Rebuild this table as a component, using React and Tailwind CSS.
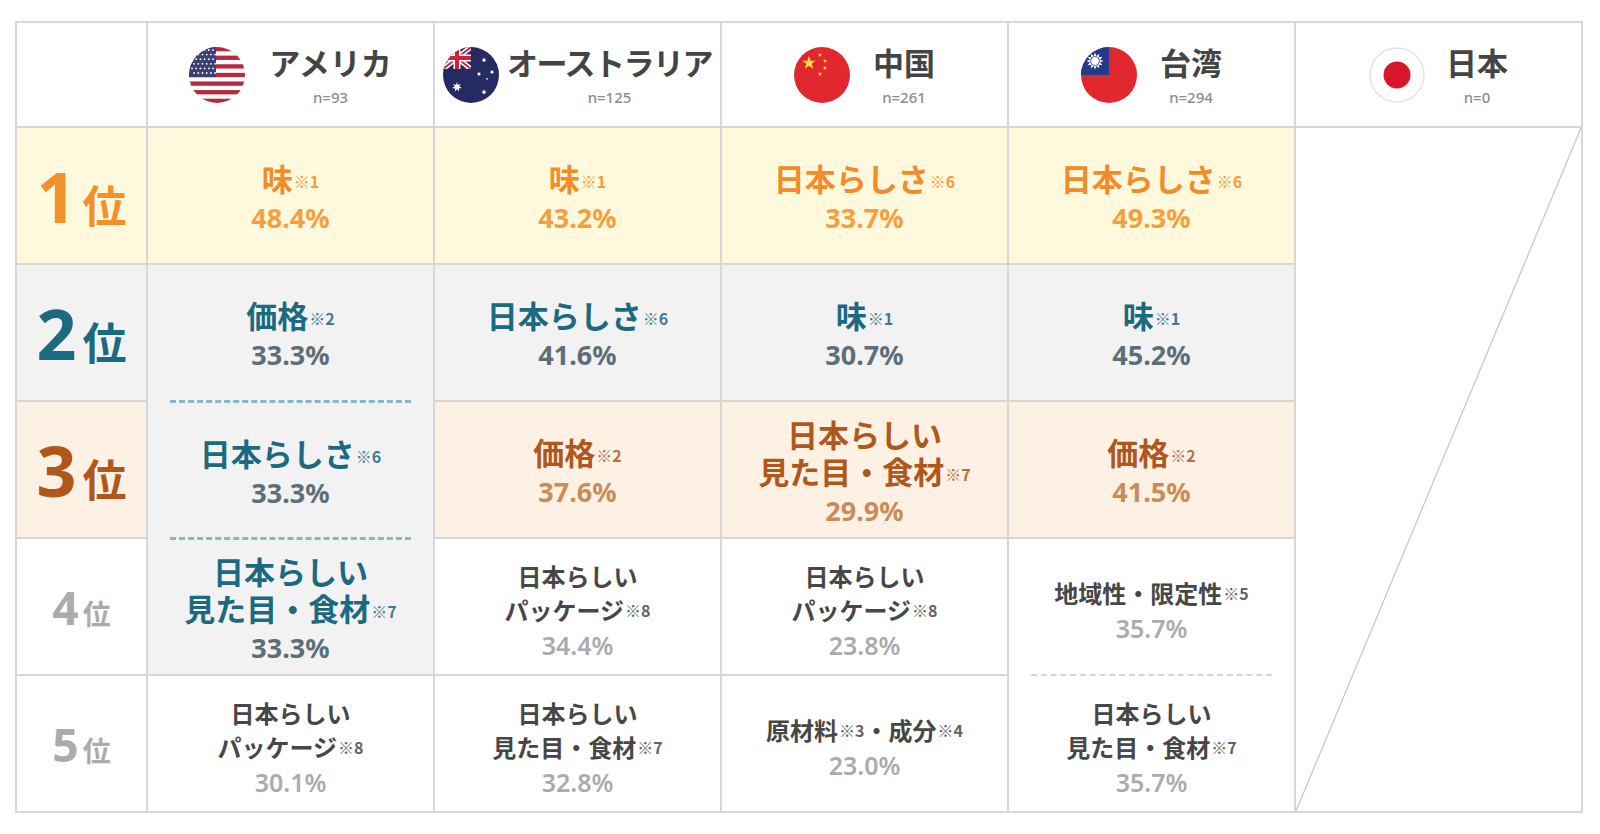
import React from "react";

const jp = "font-['Noto_Sans_CJK_JP',sans-serif]";
const num = "font-['Noto_Sans','Noto_Sans_CJK_JP',sans-serif]";

const tones = {
  orange: { label: "text-[#f28c28]", pct: "text-[#f4a041]" },
  teal: { label: "text-[#1c6a80]", pct: "text-[#5d6e78]" },
  brown: { label: "text-[#b0581c]", pct: "text-[#c98c58]" },
  gray: { label: "text-[#474747]", pct: "text-[#ababab]" },
};

function starPoints(cx, cy, r, n = 5, inner = 0.4) {
  const pts = [];
  for (let i = 0; i < n * 2; i++) {
    const rad = i % 2 === 0 ? r : r * inner;
    const a = (Math.PI / n) * i - Math.PI / 2;
    pts.push(`${(cx + rad * Math.cos(a)).toFixed(2)},${(cy + rad * Math.sin(a)).toFixed(2)}`);
  }
  return pts.join(" ");
}

function UsFlag() {
  const h = 56 / 13;
  return (
    <svg width="56" height="56" viewBox="0 0 56 56">
      <defs>
        <clipPath id="us-c">
          <circle cx="28" cy="28" r="28" />
        </clipPath>
      </defs>
      <g clipPath="url(#us-c)">
        <rect width="56" height="56" fill="#fff" />
        {Array.from({ length: 7 }).map((_, i) => (
          <rect key={i} x="0" y={i * 2 * h} width="56" height={h} fill="#b52a3f" />
        ))}
        <rect x="0" y="0" width="27" height={h * 7} fill="#3b3f72" />
        {Array.from({ length: 6 }).map((_, r) =>
          Array.from({ length: 6 }).map((_, c) => (
            <circle key={r + "-" + c} cx={3 + c * 4.2 + (r % 2) * 2.1} cy={3 + r * 4.6} r="0.9" fill="#fff" />
          ))
        )}
      </g>
    </svg>
  );
}

function AuFlag() {
  return (
    <svg width="56" height="56" viewBox="0 0 56 56">
      <defs>
        <clipPath id="au-c">
          <circle cx="28" cy="28" r="28" />
        </clipPath>
        <clipPath id="au-uj">
          <rect x="0" y="0" width="28" height="22" />
        </clipPath>
      </defs>
      <g clipPath="url(#au-c)">
        <rect width="56" height="56" fill="#262a62" />
        <g clipPath="url(#au-uj)">
          <line x1="0" y1="0" x2="28" y2="22" stroke="#fff" strokeWidth="5" />
          <line x1="0" y1="22" x2="28" y2="0" stroke="#fff" strokeWidth="5" />
          <line x1="0" y1="0" x2="28" y2="22" stroke="#d3203a" strokeWidth="1.8" />
          <line x1="0" y1="22" x2="28" y2="0" stroke="#d3203a" strokeWidth="1.8" />
          <rect x="10.5" y="0" width="7" height="22" fill="#fff" />
          <rect x="0" y="7.5" width="28" height="7" fill="#fff" />
          <rect x="12" y="0" width="4" height="22" fill="#d3203a" />
          <rect x="0" y="9" width="28" height="4" fill="#d3203a" />
        </g>
        <polygon points={starPoints(14, 40, 5, 7, 0.45)} fill="#fff" />
        <polygon points={starPoints(41, 13, 2.6, 7, 0.45)} fill="#fff" />
        <polygon points={starPoints(49, 25, 2.3, 7, 0.45)} fill="#fff" />
        <polygon points={starPoints(36, 27, 2.3, 7, 0.45)} fill="#fff" />
        <polygon points={starPoints(44, 32, 1.3, 5, 0.45)} fill="#fff" />
        <polygon points={starPoints(41, 45, 2.7, 7, 0.45)} fill="#fff" />
      </g>
    </svg>
  );
}

function CnFlag() {
  return (
    <svg width="56" height="56" viewBox="0 0 56 56">
      <circle cx="28" cy="28" r="28" fill="#e2282f" />
      <polygon points={starPoints(15, 16, 7)} fill="#fde13a" />
      <polygon points={starPoints(26, 8, 2.3)} fill="#fde13a" />
      <polygon points={starPoints(31, 14, 2.3)} fill="#fde13a" />
      <polygon points={starPoints(31, 21, 2.3)} fill="#fde13a" />
      <polygon points={starPoints(26, 27, 2.3)} fill="#fde13a" />
    </svg>
  );
}

function TwFlag() {
  return (
    <svg width="56" height="56" viewBox="0 0 56 56">
      <defs>
        <clipPath id="tw-c">
          <circle cx="28" cy="28" r="28" />
        </clipPath>
      </defs>
      <g clipPath="url(#tw-c)">
        <rect width="56" height="56" fill="#e2282f" />
        <rect x="0" y="0" width="28" height="28" fill="#233b8c" />
        <polygon points={starPoints(14, 14, 8.5, 12, 0.62)} fill="#fff" />
        <circle cx="14" cy="14" r="4.8" fill="#233b8c" />
        <circle cx="14" cy="14" r="3.9" fill="#fff" />
      </g>
    </svg>
  );
}

function JpFlag() {
  return (
    <svg width="56" height="56" viewBox="0 0 56 56">
      <circle cx="28" cy="28" r="27" fill="#fff" stroke="#e4e4e4" strokeWidth="1.5" />
      <circle cx="28" cy="28" r="13.5" fill="#d8152b" />
    </svg>
  );
}

function Header({ flag, name, n, gap, tight }) {
  return (
    <div className={`bg-white flex items-center justify-center ${gap}`}>
      {flag}
      <div className="flex flex-col items-center">
        <span className={`${jp} text-[31px] font-bold leading-[38px] text-[#444444] ${tight ? "tracking-[-1.5px]" : ""}`}>
          {name}
        </span>
        <span className={`${num} text-[15px] font-medium leading-[20px] mt-[6px] text-[#8c8c8c]`}>{n}</span>
      </div>
    </div>
  );
}

function Rank({ n, tone, bg, small }) {
  const color = {
    orange: "text-[#f2902a]",
    teal: "text-[#1c6a80]",
    brown: "text-[#b0581c]",
    gray: "text-[#ababab]",
  }[tone];
  return (
    <div className={`${bg} flex items-center justify-center ${color}`}>
      <div className="flex items-baseline">
        <span className={`${num} font-bold leading-none ${small ? "text-[46px]" : "text-[70px]"}`}>{n}</span>
        <span className={`${jp} font-bold leading-none ${small ? "text-[28px] ml-[4px]" : "text-[44px] ml-[6px]"}`}>
          位
        </span>
      </div>
    </div>
  );
}

function Note({ children }) {
  return <span className="text-[16px] font-bold leading-none opacity-85 align-[3px] ml-[1px]">{children}</span>;
}

function Entry({ lines, pct, tone, big }) {
  const t = tones[tone];
  return (
    <div className="flex flex-col items-center justify-center pt-[8px] text-center">
      {lines.map((l, i) => (
        <div
          key={i}
          className={`${jp} font-bold whitespace-nowrap ${t.label} ${
            big ? "text-[31px] leading-[37px]" : "text-[24px] leading-[34px]"
          }`}
        >
          {l}
        </div>
      ))}
      <div
        className={`${num} ${t.pct} ${
          big ? "text-[27px] font-bold leading-[44px]" : "text-[25px] font-semibold leading-[36px]"
        }`}
      >
        {pct}
      </div>
    </div>
  );
}

function Cell({ bg, children }) {
  return <div className={`${bg} flex items-center justify-center`}>{children}</div>;
}

const Y = "bg-[#fef9dc]";
const G = "bg-[#f2f2f2]";
const P = "bg-[#fdf1e4]";
const W = "bg-white";

export default function App() {
  return (
    <div className="min-h-screen bg-white pl-[15px] pt-[21px]">
      <div className="grid w-max grid-cols-[129px_repeat(5,285px)] grid-rows-[103px_repeat(5,135px)] gap-[2px] border-2 border-[#d7d7d7] bg-[#d7d7d7]">
        {/* header */}
        <div className="bg-white" />
        <Header flag={<UsFlag />} name="アメリカ" n="n=93" gap="gap-[24px]" />
        <Header flag={<AuFlag />} name="オーストラリア" n="n=125" gap="gap-[8px]" tight />
        <Header flag={<CnFlag />} name="中国" n="n=261" gap="gap-[23px]" />
        <Header flag={<TwFlag />} name="台湾" n="n=294" gap="gap-[23px]" />
        <Header flag={<JpFlag />} name="日本" n="n=0" gap="gap-[21px]" />

        {/* 1位 */}
        <Rank n="1" tone="orange" bg={Y} />
        <Cell bg={Y}>
          <Entry big tone="orange" lines={[<>味<Note>※1</Note></>]} pct="48.4%" />
        </Cell>
        <Cell bg={Y}>
          <Entry big tone="orange" lines={[<>味<Note>※1</Note></>]} pct="43.2%" />
        </Cell>
        <Cell bg={Y}>
          <Entry big tone="orange" lines={[<>日本らしさ<Note>※6</Note></>]} pct="33.7%" />
        </Cell>
        <Cell bg={Y}>
          <Entry big tone="orange" lines={[<>日本らしさ<Note>※6</Note></>]} pct="49.3%" />
        </Cell>
        <div className="relative row-span-5 bg-white">
          <svg className="absolute inset-0 h-full w-full" preserveAspectRatio="none" viewBox="0 0 100 100">
            <line x1="100" y1="0" x2="0" y2="100" stroke="#c9c9c9" strokeWidth="1.3" vectorEffect="non-scaling-stroke" />
          </svg>
        </div>

        {/* 2位 */}
        <Rank n="2" tone="teal" bg={G} />
        <div className={`${G} row-span-3 flex flex-col`}>
          <div className="flex h-[135px] items-center justify-center">
            <Entry big tone="teal" lines={[<>価格<Note>※2</Note></>]} pct="33.3%" />
          </div>
          <div className="mx-[22px] border-t-[3px] border-dashed border-[#86b6c3]" />
          <div className="flex h-[134px] items-center justify-center">
            <Entry big tone="teal" lines={[<>日本らしさ<Note>※6</Note></>]} pct="33.3%" />
          </div>
          <div className="mx-[22px] border-t-[3px] border-dashed border-[#86b6c3]" />
          <div className="flex h-[134px] items-center justify-center">
            <Entry big tone="teal" lines={["日本らしい", <>見た目・食材<Note>※7</Note></>]} pct="33.3%" />
          </div>
        </div>
        <Cell bg={G}>
          <Entry big tone="teal" lines={[<>日本らしさ<Note>※6</Note></>]} pct="41.6%" />
        </Cell>
        <Cell bg={G}>
          <Entry big tone="teal" lines={[<>味<Note>※1</Note></>]} pct="30.7%" />
        </Cell>
        <Cell bg={G}>
          <Entry big tone="teal" lines={[<>味<Note>※1</Note></>]} pct="45.2%" />
        </Cell>

        {/* 3位 */}
        <Rank n="3" tone="brown" bg={P} />
        <Cell bg={P}>
          <Entry big tone="brown" lines={[<>価格<Note>※2</Note></>]} pct="37.6%" />
        </Cell>
        <Cell bg={P}>
          <Entry big tone="brown" lines={["日本らしい", <>見た目・食材<Note>※7</Note></>]} pct="29.9%" />
        </Cell>
        <Cell bg={P}>
          <Entry big tone="brown" lines={[<>価格<Note>※2</Note></>]} pct="41.5%" />
        </Cell>

        {/* 4位 */}
        <Rank n="4" tone="gray" bg={W} small />
        <Cell bg={W}>
          <Entry tone="gray" lines={["日本らしい", <>パッケージ<Note>※8</Note></>]} pct="34.4%" />
        </Cell>
        <Cell bg={W}>
          <Entry tone="gray" lines={["日本らしい", <>パッケージ<Note>※8</Note></>]} pct="23.8%" />
        </Cell>
        <div className={`${W} row-span-2 flex flex-col`}>
          <div className="flex h-[135px] items-center justify-center">
            <Entry tone="gray" lines={[<>地域性・限定性<Note>※5</Note></>]} pct="35.7%" />
          </div>
          <div className="mx-[22px] border-t-2 border-dashed border-[#d6d6d6]" />
          <div className="flex h-[135px] items-center justify-center">
            <Entry tone="gray" lines={["日本らしい", <>見た目・食材<Note>※7</Note></>]} pct="35.7%" />
          </div>
        </div>

        {/* 5位 */}
        <Rank n="5" tone="gray" bg={W} small />
        <Cell bg={W}>
          <Entry tone="gray" lines={["日本らしい", <>パッケージ<Note>※8</Note></>]} pct="30.1%" />
        </Cell>
        <Cell bg={W}>
          <Entry tone="gray" lines={["日本らしい", <>見た目・食材<Note>※7</Note></>]} pct="32.8%" />
        </Cell>
        <Cell bg={W}>
          <Entry tone="gray" lines={[<>原材料<Note>※3</Note>・成分<Note>※4</Note></>]} pct="23.0%" />
        </Cell>
      </div>
    </div>
  );
}
